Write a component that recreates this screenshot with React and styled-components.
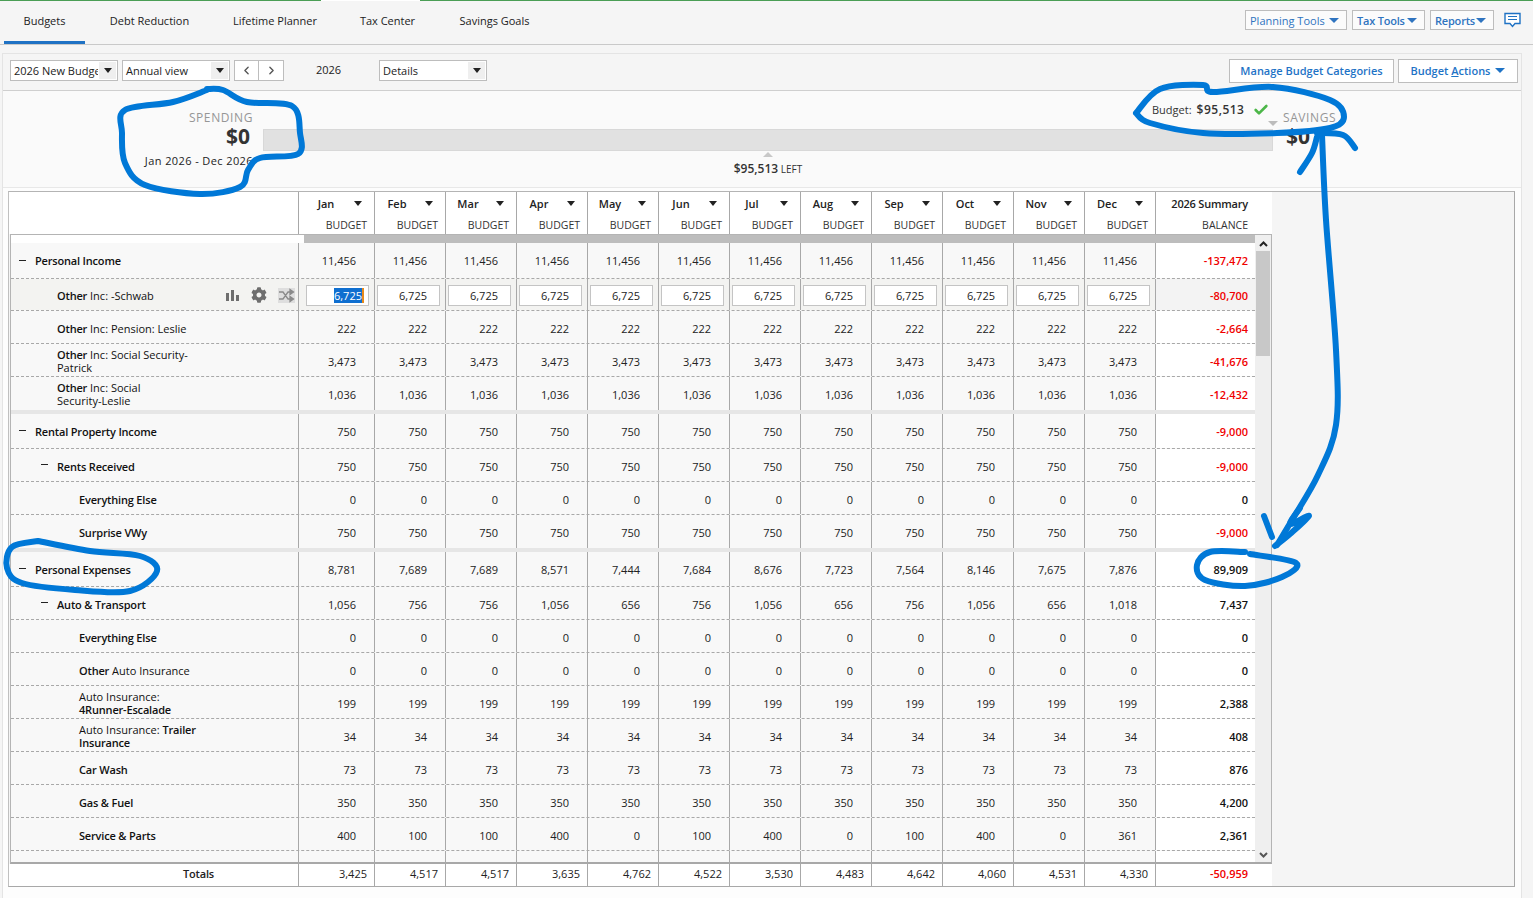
import React from "react";
import styled, { createGlobalStyle } from "styled-components";
import { ChevronLeft, ChevronRight, Check } from "lucide-react";
import { FaCog } from "react-icons/fa";

const GlobalStyle = createGlobalStyle`
  html, body { margin: 0; padding: 0; height: 898px; overflow: hidden; background: #f5f5f5; }
  body { font-family: "Open Sans", "Liberation Sans", sans-serif; font-size: 11px; color: #222; }
  * { box-sizing: border-box; }
`;

const COLS = "76px repeat(11, 71px) 100px";

const Page = styled.div`
  position: relative;
  width: 1533px;
  height: 898px;
  overflow: hidden;
  display: flex;
  flex-direction: column;
`;

const TopBar = styled.div`
  height: 44px;
  flex: none;
  display: flex;
  align-items: stretch;
  padding: 1px 12px 0 4px;
  background: #f5f5f5;
  border-bottom: 1px solid #c9c9c9;
`;

const GreenLine = styled.div`
  height: 1px;
  background: ${(p) => (p.$gap ? "#fff" : "#4a9e55")};
  width: ${(p) => p.$w};
  flex: ${(p) => (p.$w ? "none" : 1)};
`;

const GreenRow = styled.div`
  display: flex;
  height: 1px;
  flex: none;
  background: #f5f5f5;
`;

const Tab = styled.div`
  width: ${(p) => p.$w}px;
  display: flex;
  align-items: center;
  justify-content: center;
  margin-right: 4px;
  padding-bottom: 2px;
  color: #222;
  border-bottom: 3px solid ${(p) => (p.$active ? "#1f72c4" : "transparent")};
`;

const TopTools = styled.div`
  margin-left: auto;
  display: flex;
  align-items: center;
  gap: 5px;
  padding-bottom: 6px;
`;

const Caret = styled.span`
  display: inline-block;
  flex: none;
  width: 0;
  height: 0;
  border-left: ${(p) => p.$size || 4}px solid transparent;
  border-right: ${(p) => p.$size || 4}px solid transparent;
  border-top: ${(p) => (p.$size ? p.$size : 5)}px solid ${(p) => p.$color || "#222"};
`;

const ToolButton = styled.div`
  height: 20px;
  width: ${(p) => p.$w}px;
  display: flex;
  align-items: center;
  justify-content: space-between;
  padding: 0 7px 0 4px;
  background: #fbfbfb;
  border: 1px solid #bdbdbd;
  color: #2f74c0;
  font-weight: ${(p) => (p.$light ? 400 : 600)};
  letter-spacing: ${(p) => (p.$light ? 0 : "-0.2px")};
  white-space: nowrap;
`;

const ChatIcon = styled.svg`
  margin-left: 5px;
  width: 17px;
  height: 16px;
`;

const Panel = styled.div`
  margin: 8px 11px 0 2px;
  flex: 1;
  min-height: 0;
  background: #fdfdfd;
  border: 1px solid #e4e4e4;
  border-bottom: none;
  display: flex;
  flex-direction: column;
`;

const Toolbar = styled.div`
  height: 37px;
  flex: none;
  display: flex;
  align-items: center;
  padding: 0 3px 3px 7px;
  background: #f5f5f5;
  border-bottom: 1px solid #cfcfcf;
`;

const Select = styled.div`
  width: 108px;
  height: 21px;
  margin-right: 4px;
  display: flex;
  align-items: stretch;
  background: #fff;
  border: 1px solid #bdbdbd;
`;

const SelectLabel = styled.div`
  flex: 1;
  overflow: hidden;
  white-space: nowrap;
  padding: 2px 0 0 3px;
  color: #222;
`;

const SelectArrow = styled.div`
  width: 17px;
  margin: 1px;
  background: #efefef;
  display: flex;
  align-items: center;
  justify-content: center;
`;

const NavButton = styled.div`
  width: 25px;
  height: 21px;
  background: #fff;
  border: 1px solid #bdbdbd;
  border-left: ${(p) => (p.$joined ? "none" : "1px solid #bdbdbd")};
  display: flex;
  align-items: center;
  justify-content: center;
  color: #555;
`;

const YearLabel = styled.div`
  width: 95px;
  padding: 0 0 2px 32px;
`;

const ActionButton = styled.div`
  height: 24px;
  width: ${(p) => p.$w}px;
  margin-left: 4px;
  display: flex;
  align-items: center;
  justify-content: center;
  gap: 5px;
  background: #fff;
  border: 1px solid #bdbdbd;
  color: #1e73c6;
  font-weight: 600;
  white-space: nowrap;
`;

const Spacer = styled.div`
  flex: 1;
`;

const SummaryBand = styled.div`
  position: relative;
  height: 97px;
  flex: none;
  display: flex;
  background: #fafafa;
  border-bottom: 1px solid #e8e8e8;
`;

const SpendCol = styled.div`
  width: 260px;
  padding: 19px 10px 0 0;
  text-align: right;
`;

const CapLabel = styled.div`
  font-size: 12px;
  line-height: 15px;
  color: #969696;
  letter-spacing: 0.6px;
`;

const BigAmount = styled.div`
  font-size: 21px;
  line-height: 22px;
  font-weight: 700;
  color: #333;
  padding: 0 ${(p) => (p.$left ? 0 : 3)}px 0 ${(p) => (p.$left ? 3 : 0)}px;
`;

const DateRange = styled.div`
  margin-top: 6px;
  color: #222;
  letter-spacing: 0.4px;
`;

const BarCol = styled.div`
  width: 1010px;
  padding-top: 38px;
`;

const Bar = styled.div`
  height: 22px;
  background: #e1e1e1;
  border: 1px solid #d8d8d8;
`;

const LeftMark = styled.div`
  display: flex;
  flex-direction: column;
  align-items: center;
  margin-top: 1px;
  font-size: 10px;
  color: #333;
`;

const UpCaret = styled.span`
  width: 0;
  height: 0;
  border-left: 5px solid transparent;
  border-right: 5px solid transparent;
  border-bottom: 5px solid #c8c8c8;
  margin-bottom: 3px;
`;

const LeftText = styled.div`
  b { font-size: 12px; font-weight: 600; }
`;

const SavingsCol = styled.div`
  padding: 19px 0 0 10px;
`;

const BudgetMarker = styled.div`
  position: absolute;
  left: 1149px;
  top: 10px;
  display: flex;
  align-items: center;
  color: #333;
  b { font-size: 12px; font-weight: 600; letter-spacing: 0.5px; margin-left: 5px; }
  svg { margin-left: 9px; }
`;

const MarkCaret = styled.span`
  position: absolute;
  left: 1265px;
  top: 30px;
  width: 0;
  height: 0;
  border-left: 5px solid transparent;
  border-right: 5px solid transparent;
  border-top: 5px solid #bcbcbc;
`;

const Frame = styled.div`
  margin: 3px 0 0 5px;
  width: 1507px;
  height: 696px;
  flex: none;
  border: 1px solid #a8a8a8;
  border-top-color: #b4b4b4;
  border-left-color: #c0c0c0;
  background: #f5f5f5;
  display: flex;
  flex-direction: column;
`;

const HeadRow = styled.div`
  width: 1263px;
  height: 42px;
  flex: none;
  display: grid;
  grid-template-columns: 289px ${COLS} 17px;
  background: #fff;
`;

const HeadCell = styled.div`
  border-left: 1px solid #a8a8a8;
  padding-left: ${(p) => (p.$first ? 5 : 0)}px;
  display: flex;
  flex-direction: column;
`;

const HeadBlank = styled.div``;

const HeadTop = styled.div`
  height: 22px;
  display: flex;
  align-items: center;
  font-weight: 600;
  padding-right: 12px;
`;

const HeadName = styled.div`
  flex: 1;
  text-align: center;
  padding-right: 6px;
`;

const HeadSub = styled.div`
  height: 20px;
  display: flex;
  align-items: center;
  justify-content: flex-end;
  padding: 1px ${(p) => (p.$flush ? 0 : 7)}px 0 0;
  color: #333;
  font-size: 10.5px;
`;

const SummaryHead = styled.div`
  grid-column: span 2;
  border-left: 1px solid #a8a8a8;
  padding-right: 24px;
  text-align: right;
`;

const SummaryTitle = styled.div`
  height: 22px;
  padding-top: 4px;
  font-weight: 600;
  letter-spacing: -0.2px;
`;

const Body = styled.div`
  width: 1262px;
  height: 630px;
  flex: none;
  margin-left: 1px;
  border: 1px solid #b4b4b4;
  border-bottom: 2px solid #a8a8a8;
  background: #fff;
  display: flex;
`;

const BodyMain = styled.div`
  width: 1244px;
  display: flex;
  flex-direction: column;
  background: #fff;
`;

const GreyStrip = styled.div`
  height: 8px;
  flex: none;
  margin-left: 293px;
  background: #bdbdbd;
`;

const Rows = styled.div`
  flex: 1;
  min-height: 0;
  overflow: hidden;
  background: #f8f8f8;
`;

const Row = styled.div`
  height: ${(p) => p.$h}px;
  display: grid;
  grid-template-columns: 287px ${COLS};
  border-bottom: ${(p) => (p.$sep ? "4px solid #e6e6e6" : "1px dashed #a8a8a8")};
  > div { padding-top: ${(p) => p.$nudge}px; }
`;

const LabelCell = styled.div`
  display: flex;
  align-items: center;
  padding-left: ${(p) => 24 + p.$level * 22}px;
  position: relative;
  line-height: 13px;
  background: ${(p) => (p.$hot ? "#f3f3f1" : "transparent")};
  font-weight: ${(p) => (p.$strong ? 600 : 400)};
  letter-spacing: ${(p) => (p.$strong ? "-0.18px" : 0)};
  color: #111;
  b { font-weight: 600; letter-spacing: -0.18px; }
`;

const Minus = styled.span`
  position: absolute;
  left: ${(p) => 8 + p.$level * 22}px;
  top: 50%;
  width: 7px;
  height: 1px;
  margin-top: -1px;
  background: #222;
`;

const RowIcons = styled.div`
  position: absolute;
  right: 3px;
  top: 8px;
  display: flex;
  align-items: center;
  gap: 11px;
  color: #6e6e6e;
`;

const NumCell = styled.div`
  border-left: 1px solid #a8a8a8;
  display: flex;
  align-items: center;
  justify-content: flex-end;
  padding-right: 18px;
  color: #222;
  background: ${(p) => (p.$hot ? "#f3f3f1" : "transparent")};
`;

const InputCell = styled(NumCell)`
  padding-right: 5px;
`;

const AmountInput = styled.div`
  width: 63px;
  height: 21px;
  background: #fff;
  border: 1px solid #c4c4c4;
  display: flex;
  align-items: center;
  justify-content: flex-end;
  padding-right: ${(p) => (p.$focus ? 4 : 12)}px;
  span {
    background: #0f6fd0;
    color: #fff;
    border-right: 2px solid #e88a1a;
    line-height: 15px;
  }
`;

const SumCell = styled.div`
  border-left: 1px solid #a8a8a8;
  display: flex;
  align-items: center;
  justify-content: flex-end;
  padding-right: 7px;
  font-weight: 600;
  color: ${(p) => (p.$neg ? "#f00000" : "#111")};
  background: ${(p) => (p.$hot ? "#f3f3f3" : "#fff")};
`;

const Scrollbar = styled.div`
  width: 16px;
  background: #efefef;
  display: flex;
  flex-direction: column;
  align-items: center;
  padding-top: 6px;
`;

const ScrollArrow = styled.svg`
  width: 9px;
  height: 6px;
  flex: none;
  margin-bottom: ${(p) => (p.$down ? 4 : 0)}px;
`;

const Thumb = styled.div`
  width: 14px;
  height: 105px;
  margin-top: 4px;
  background: #c8c8c8;
`;

const TotalsRow = styled.div`
  width: 1263px;
  height: 22px;
  flex: none;
  display: grid;
  grid-template-columns: 289px ${COLS} 17px;
  background: #fff;
`;

const TotalsLabel = styled.div`
  text-align: right;
  padding: 2px 84px 0 0;
  font-weight: 600;
  letter-spacing: -0.18px;
`;

const TotalCell = styled.div`
  border-left: 1px solid #a8a8a8;
  text-align: right;
  padding: 2px 7px 0 0;
`;

const TotalSum = styled(TotalCell)`
  grid-column: span 2;
  padding-right: 24px;
  color: #f00000;
  font-weight: 600;
`;

const Scribble = styled.svg`
  position: absolute;
  left: 0;
  top: 0;
  width: 1533px;
  height: 898px;
  pointer-events: none;
`;

const MONTHS = ["Jan", "Feb", "Mar", "Apr", "May", "Jun", "Jul", "Aug", "Sep", "Oct", "Nov", "Dec"];
const fill = (v) => Array(12).fill(v);
const o = (s) => <span><b>Other</b> {s}</span>;

const ROWS = [
  { label: "Personal Income", strong: true, level: 0, minus: true, h: 36, vals: fill("11,456"), sum: "-137,472" },
  { label: o("Inc: -Schwab"), level: 1, h: 32, hot: true, vals: fill("6,725"), sum: "-80,700" },
  { label: o("Inc: Pension: Leslie"), level: 1, h: 33, vals: fill("222"), sum: "-2,664" },
  { label: <span>{o("Inc: Social Security-")}<br />Patrick</span>, level: 1, h: 33, vals: fill("3,473"), sum: "-41,676" },
  { label: <span>{o("Inc: Social")}<br />Security-Leslie</span>, level: 1, h: 37, sep: true, vals: fill("1,036"), sum: "-12,432" },
  { label: "Rental Property Income", strong: true, level: 0, minus: true, h: 35, vals: fill("750"), sum: "-9,000" },
  { label: "Rents Received", strong: true, level: 1, minus: true, h: 33, vals: fill("750"), sum: "-9,000" },
  { label: "Everything Else", strong: true, level: 2, h: 33, vals: fill("0"), sum: "0" },
  { label: "Surprise VWy", strong: true, level: 2, h: 37, sep: true, vals: fill("750"), sum: "-9,000" },
  { label: "Personal Expenses", strong: true, level: 0, minus: true, h: 35, vals: ["8,781", "7,689", "7,689", "8,571", "7,444", "7,684", "8,676", "7,723", "7,564", "8,146", "7,675", "7,876"], sum: "89,909" },
  { label: "Auto & Transport", strong: true, level: 1, minus: true, h: 33, vals: ["1,056", "756", "756", "1,056", "656", "756", "1,056", "656", "756", "1,056", "656", "1,018"], sum: "7,437" },
  { label: "Everything Else", strong: true, level: 2, h: 33, vals: fill("0"), sum: "0" },
  { label: o("Auto Insurance"), level: 2, h: 33, vals: fill("0"), sum: "0" },
  { label: <span>Auto Insurance:<br /><b>4Runner-Escalade</b></span>, level: 2, h: 33, vals: fill("199"), sum: "2,388" },
  { label: <span>Auto Insurance: <b>Trailer</b><br /><b>Insurance</b></span>, level: 2, h: 33, vals: fill("34"), sum: "408" },
  { label: "Car Wash", strong: true, level: 2, h: 33, vals: fill("73"), sum: "876" },
  { label: "Gas & Fuel", strong: true, level: 2, h: 33, vals: fill("350"), sum: "4,200" },
  { label: "Service & Parts", strong: true, level: 2, h: 33, vals: ["400", "100", "100", "400", "0", "100", "400", "0", "100", "400", "0", "361"], sum: "2,361" },
  { label: "", level: 2, h: 33, vals: fill(""), sum: "" },
];

const TOTALS = ["3,425", "4,517", "4,517", "3,635", "4,762", "4,522", "3,530", "4,483", "4,642", "4,060", "4,531", "4,330"];

// rows of 33px sit a pixel lower than the taller ones
const nudgeFor = (r) => (r.level === 0 ? 0 : r.h === 33 ? 2 : 1);

// hand drawn marks, smoothed through the points
const smooth = (pts) => {
  let d = `M${pts[0][0]} ${pts[0][1]}`;
  for (let i = 0; i < pts.length - 1; i++) {
    const p0 = pts[i - 1] || pts[i];
    const p1 = pts[i];
    const p2 = pts[i + 1];
    const p3 = pts[i + 2] || p2;
    d += ` C${p1[0] + (p2[0] - p0[0]) / 6} ${p1[1] + (p2[1] - p0[1]) / 6} ${p2[0] - (p3[0] - p1[0]) / 6} ${p2[1] - (p3[1] - p1[1]) / 6} ${p2[0]} ${p2[1]}`;
  }
  return d;
};

const MARKS = [
  [[207, 89], [223, 90], [247, 102], [292, 106], [300, 133], [298, 154], [260, 158], [248, 170], [240, 187], [200, 194], [145, 185], [125, 163], [122, 133], [125, 110], [173, 102], [207, 90]],
  [[1136, 113], [1160, 89], [1203, 85], [1213, 92], [1273, 87], [1330, 100], [1344, 117], [1330, 128], [1277, 133], [1203, 133], [1150, 123], [1136, 113]],
  [[1317, 133], [1343, 135], [1355, 148]],
  [[1317, 137], [1312, 153], [1300, 172]],
  [[1322, 135], [1326, 220], [1336, 350], [1336, 425], [1318, 475], [1292, 520], [1277, 545]],
  [[1264, 516], [1272, 537]],
  [[1275, 546], [1290, 534], [1309, 516], [1290, 524], [1300, 508]],
  [[38, 541], [12, 547], [7, 568], [22, 583], [75, 590], [130, 591], [157, 571], [140, 556], [90, 551], [38, 541]],
  [[1245, 552], [1210, 552], [1197, 565], [1205, 580], [1245, 586], [1282, 577], [1296, 563], [1250, 554]],
];

function App() {
  return (
    <Page>
      <GlobalStyle />
      <GreenRow>
        <GreenLine $w="321px" />
        <GreenLine $w="99px" $gap />
        <GreenLine />
      </GreenRow>
      <TopBar>
        <Tab $active $w={81}>Budgets</Tab>
        <Tab $w={121}>Debt Reduction</Tab>
        <Tab $w={122}>Lifetime Planner</Tab>
        <Tab $w={95}>Tax Center</Tab>
        <Tab $w={111}>Savings Goals</Tab>
        <TopTools>
          <ToolButton $w={102} $light>Planning Tools <Caret $size={5} $color="#2f74c0" /></ToolButton>
          <ToolButton $w={73}>Tax Tools <Caret $size={5} $color="#2f74c0" /></ToolButton>
          <ToolButton $w={64}>Reports <Caret $size={5} $color="#2f74c0" /></ToolButton>
          <ChatIcon viewBox="0 0 17 16">
            <path d="M1 1.5h15v10h-5l-2.5 3-2.5-3H1z" fill="#fff" stroke="#1f72c4" strokeWidth="1.4" />
            <path d="M4 4.5h9M4 7.5h9" stroke="#1f72c4" strokeWidth="1.2" />
          </ChatIcon>
        </TopTools>
      </TopBar>
      <Panel>
        <Toolbar>
          <Select>
            <SelectLabel>2026 New Budget</SelectLabel>
            <SelectArrow><Caret /></SelectArrow>
          </Select>
          <Select>
            <SelectLabel>Annual view</SelectLabel>
            <SelectArrow><Caret /></SelectArrow>
          </Select>
          <NavButton><ChevronLeft size={13} strokeWidth={2.5} /></NavButton>
          <NavButton $joined><ChevronRight size={13} strokeWidth={2.5} /></NavButton>
          <YearLabel>2026</YearLabel>
          <Select>
            <SelectLabel>Details</SelectLabel>
            <SelectArrow><Caret /></SelectArrow>
          </Select>
          <Spacer />
          <ActionButton $w={165}>Manage Budget Categories</ActionButton>
          <ActionButton $w={120}><span>Budget <u>A</u>ctions</span> <Caret $size={5} $color="#1e73c6" /></ActionButton>
        </Toolbar>
        <SummaryBand>
          <SpendCol>
            <CapLabel>SPENDING</CapLabel>
            <BigAmount>$0</BigAmount>
            <DateRange>Jan 2026 - Dec 2026</DateRange>
          </SpendCol>
          <BarCol>
            <Bar />
            <LeftMark>
              <UpCaret />
              <LeftText><b>$95,513</b> LEFT</LeftText>
            </LeftMark>
          </BarCol>
          <SavingsCol>
            <CapLabel>SAVINGS</CapLabel>
            <BigAmount $left>$0</BigAmount>
          </SavingsCol>
          <BudgetMarker>
            Budget: <b>$95,513</b>
            <Check size={16} strokeWidth={4} color="#4cb648" />
          </BudgetMarker>
          <MarkCaret />
        </SummaryBand>
        <Frame>
          <HeadRow>
            <HeadBlank />
            {MONTHS.map((m, i) => (
              <HeadCell key={m} $first={i === 0}>
                <HeadTop>
                  <HeadName>{m}</HeadName>
                  <Caret />
                </HeadTop>
                <HeadSub>BUDGET</HeadSub>
              </HeadCell>
            ))}
            <SummaryHead>
              <SummaryTitle>2026 Summary</SummaryTitle>
              <HeadSub $flush>BALANCE</HeadSub>
            </SummaryHead>
          </HeadRow>
          <Body>
            <BodyMain>
              <GreyStrip />
              <Rows>
                {ROWS.map((r, idx) => (
                  <Row key={idx} $h={r.h} $sep={r.sep} $nudge={nudgeFor(r)}>
                    <LabelCell $level={r.level} $strong={r.strong} $hot={r.hot}>
                      {r.minus && <Minus $level={r.level} />}
                      {r.label}
                      {r.hot && (
                        <RowIcons>
                          <svg width="14" height="11" viewBox="0 0 14 11" fill="#6e6e6e">
                            <rect x="0" y="3" width="3" height="8" />
                            <rect x="5" y="0" width="3" height="11" />
                            <rect x="10" y="5" width="3" height="6" />
                          </svg>
                          <FaCog size={16} />
                          <svg width="17" height="15" viewBox="0 0 17 15" fill="none" stroke="#8a8a8a" strokeWidth="1.3">
                            <rect x="0" y="0" width="17" height="15" fill="#dedede" stroke="none" />
                            <path d="M1 4h4l5 7h4M1 11h4l5-7h4" />
                            <path d="M12 1.5l3.5 2.5-3.5 2.5zM12 8.5l3.5 2.5-3.5 2.5z" fill="#8a8a8a" />
                          </svg>
                        </RowIcons>
                      )}
                    </LabelCell>
                    {r.vals.map((v, i) =>
                      r.hot ? (
                        <InputCell key={i} $hot>
                          <AmountInput $focus={i === 0}>{i === 0 ? <span>{v}</span> : v}</AmountInput>
                        </InputCell>
                      ) : (
                        <NumCell key={i}>{v}</NumCell>
                      )
                    )}
                    <SumCell $neg={r.sum.startsWith("-")} $hot={r.hot}>{r.sum}</SumCell>
                  </Row>
                ))}
              </Rows>
            </BodyMain>
            <Scrollbar>
              <ScrollArrow viewBox="0 0 9 6"><path d="M1 5l3.5-3.5L8 5" fill="none" stroke="#222" strokeWidth="2" /></ScrollArrow>
              <Thumb />
              <Spacer />
              <ScrollArrow $down viewBox="0 0 9 6"><path d="M1 1l3.5 3.5L8 1" fill="none" stroke="#555" strokeWidth="2" /></ScrollArrow>
            </Scrollbar>
          </Body>
          <TotalsRow>
            <TotalsLabel>Totals</TotalsLabel>
            {TOTALS.map((t, i) => <TotalCell key={i}>{t}</TotalCell>)}
            <TotalSum>-50,959</TotalSum>
          </TotalsRow>
        </Frame>
      </Panel>
      <Scribble viewBox="0 0 1533 898" fill="none" stroke="#0078d7" strokeWidth="6" strokeLinecap="round" strokeLinejoin="round">
        {MARKS.map((pts, i) => <path key={i} d={smooth(pts)} />)}
      </Scribble>
    </Page>
  );
}

export default App;
